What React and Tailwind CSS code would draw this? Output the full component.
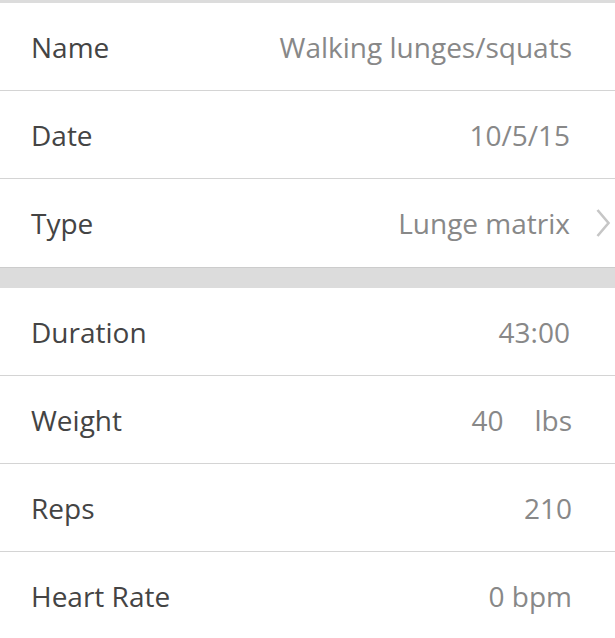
const rowsTop = [
  { label: 'Name', value: 'Walking lunges/squats' },
  { label: 'Date', value: '10/5/15', inset: true },
  { label: 'Type', value: 'Lunge matrix', chevron: true, inset: true },
];

const rowsBottom = [
  { label: 'Duration', value: '43:00', inset: true },
  { label: 'Weight', value: '40', unit: 'lbs' },
  { label: 'Reps', value: '210' },
  { label: 'Heart Rate', value: '0 bpm' },
];

function Row({ row, last }) {
  return (
    <div
      className={`relative flex h-[88px] items-center justify-between pl-[31px] ${
        row.inset ? 'pr-[45px]' : 'pr-[43px]'
      } ${last ? '' : 'border-b border-[#d4d4d4]'}`}
    >
      <span className="text-[28px] text-[#444444]">{row.label}</span>
      <span className="flex items-center text-[28px] text-[#888888]">
        {row.value}
        {row.unit && <span className="ml-[31px]">{row.unit}</span>}
      </span>
      {row.chevron && (
        <svg
          className="absolute right-[4px] top-1/2 -translate-y-1/2"
          width="16"
          height="30"
          viewBox="0 0 16 30"
          fill="none"
        >
          <path d="M2.5 2 L13.5 15 L2.5 28" stroke="#c6c6c6" strokeWidth="2.6" />
        </svg>
      )}
    </div>
  );
}

export default function App() {
  return (
    <div className="h-[638px] w-[615px] overflow-hidden bg-white font-['Open_Sans',sans-serif]">
      <div className="h-[3px] bg-[#dcdcdc]" />
      {rowsTop.map((r, i) => (
        <Row key={r.label} row={r} last={i === rowsTop.length - 1} />
      ))}
      <div className="h-[21px] border-t border-[#cccccc] bg-[#dcdcdc]" />
      {rowsBottom.map((r, i) => (
        <Row key={r.label} row={r} last={i === rowsBottom.length - 1} />
      ))}
    </div>
  );
}
